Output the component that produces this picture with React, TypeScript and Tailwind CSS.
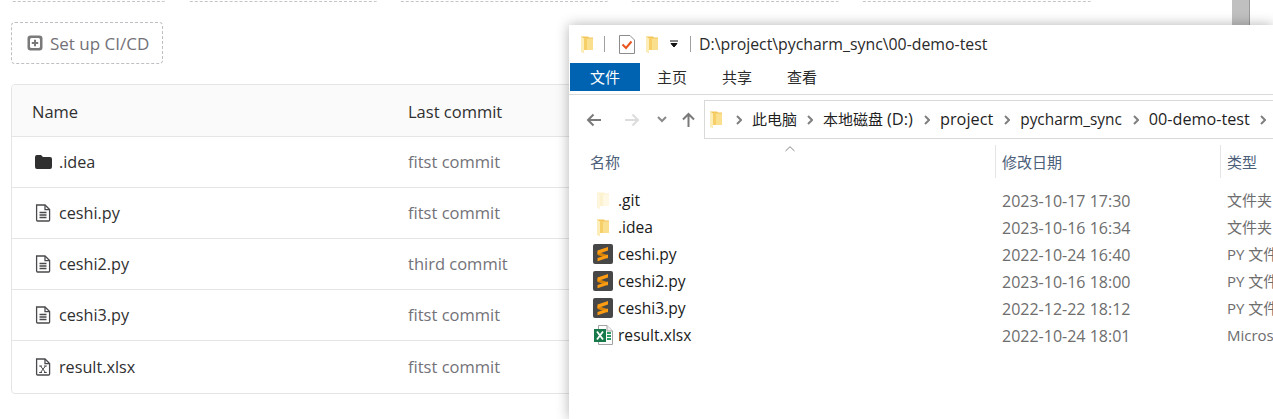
import React from "react";

const cjk = '"Open Sans","Noto Sans CJK SC",sans-serif';

function YFolder({ faded = false }: { faded?: boolean }) {
  return (
    <svg width="12" height="17" viewBox="0 0 12 17" className="shrink-0">
      <path d="M0 0.5 H7 L8 1.5 H12 V14 H3 V17 L0 15.5 Z" fill={faded ? "#fdf2cf" : "#f3c65a"} />
      <path d="M3 2.5 H12 V14 H3 Z" fill={faded ? "#fef8e4" : "#fadf8e"} />
      <path d="M3 2.5 H6 V14 H3 Z" fill={faded ? "#fdf2cf" : "#f6cf68"} />
      <path d="M0 0.5 L3 2.5 V17 L0 15.5 Z" fill={faded ? "#fef6dc" : "#fdeeb9"} />
    </svg>
  );
}

function Sublime() {
  return (
    <svg width="20" height="20" viewBox="0 0 20 20" className="shrink-0">
      <rect x="0" y="0" width="20" height="20" rx="2" fill="#474747" />
      <path d="M4.5 7.8 V11 L15 14.5 V11.2 Z" fill="#d98208" />
      <path d="M15 3 L4.5 6.6 V10.2 L15 6.6 Z" fill="#fb9c12" />
      <path d="M15 10.4 L4.5 14 V17.2 L15 13.7 Z" fill="#fb9c12" />
    </svg>
  );
}

function Excel() {
  return (
    <svg width="19" height="20" viewBox="0 0 19 20" className="shrink-0">
      <path d="M4.5 0.5 H13 L18.5 6 V19.5 H4.5 Z" fill="#fff" stroke="#a3a3a3" />
      <path d="M13 0.5 V6 H18.5" fill="#f0f0f0" stroke="#a3a3a3" />
      <path d="M13 8 H17 M13 11 H17 M13 14 H17" stroke="#2d9a62" strokeWidth="2" />
      <rect x="0" y="4" width="12" height="13" fill="#17794a" />
      <path d="M3 6.5 L9 14.5 M9 6.5 L3 14.5" stroke="#fff" strokeWidth="1.8" />
    </svg>
  );
}

function FileLines() {
  return (
    <svg width="16" height="18" viewBox="0 0 16 18" className="shrink-0" fill="none" stroke="#4a4a4e" strokeWidth="1.3">
      <path d="M1.6 1 H10 L14.6 5.6 V16 a1 1 0 0 1 -1 1 H2.6 a1 1 0 0 1 -1 -1 Z" />
      <path d="M10 1 V5.6 H14.6" />
      <path d="M4.5 8.5 H11.5 M4.5 11 H11.5 M4.5 13.5 H11.5" />
    </svg>
  );
}

function FileX() {
  return (
    <svg width="16" height="18" viewBox="0 0 16 18" className="shrink-0" fill="none" stroke="#4a4a4e" strokeWidth="1.3">
      <path d="M1.6 1 H10 L14.6 5.6 V16 a1 1 0 0 1 -1 1 H2.6 a1 1 0 0 1 -1 -1 Z" />
      <path d="M10 1 V5.6 H14.6" />
      <path d="M5.5 8 L10.5 14.5 M10.5 8 L5.5 14.5 M4.2 8 H7 M9 8 H11.8 M4.2 14.5 H7 M9 14.5 H11.8" strokeWidth="1" />
    </svg>
  );
}

function FolderDark() {
  return (
    <svg width="17" height="14" viewBox="0 0 17 14" className="shrink-0">
      <path d="M0 2 a2 2 0 0 1 2 -2 H6 L8 2 H15 a2 2 0 0 1 2 2 V12 a2 2 0 0 1 -2 2 H2 a2 2 0 0 1 -2 -2 Z" fill="#303030" />
    </svg>
  );
}

function Chevron() {
  return (
    <svg width="6" height="10" viewBox="0 0 6 10" className="shrink-0" fill="none" stroke="#808080" strokeWidth="2">
      <path d="M1 1 L5 5 L1 9" />
    </svg>
  );
}

const repoRows = [
  { icon: <FolderDark />, name: ".idea", commit: "fitst commit" },
  { icon: <FileLines />, name: "ceshi.py", commit: "fitst commit" },
  { icon: <FileLines />, name: "ceshi2.py", commit: "third commit" },
  { icon: <FileLines />, name: "ceshi3.py", commit: "fitst commit" },
  { icon: <FileX />, name: "result.xlsx", commit: "fitst commit" },
];

const fileRows = [
  { icon: <YFolder faded />, name: ".git", date: "2023-10-17 17:30", type: "文件夹" },
  { icon: <YFolder />, name: ".idea", date: "2023-10-16 16:34", type: "文件夹" },
  { icon: <Sublime />, name: "ceshi.py", date: "2022-10-24 16:40", type: "PY 文件" },
  { icon: <Sublime />, name: "ceshi2.py", date: "2023-10-16 18:00", type: "PY 文件" },
  { icon: <Sublime />, name: "ceshi3.py", date: "2022-12-22 18:12", type: "PY 文件" },
  { icon: <Excel />, name: "result.xlsx", date: "2022-10-24 18:01", type: "Microsoft Excel" },
];

const topSegments = [
  { w: 153, gap: 24 },
  { w: 188, gap: 23 },
  { w: 208, gap: 23 },
  { w: 208, gap: 23 },
  { w: 229, gap: 0 },
];

export default function App() {
  return (
    <div
      className="relative h-[419px] w-[1273px] overflow-hidden bg-white text-[#303030]"
      style={{ fontFamily: cjk }}
    >
      {/* GitLab page */}
      <div className="pl-[11px] pr-[12px]">
        <div className="flex h-[2px] pl-px">
          {topSegments.map((s, i) => (
            <div
              key={i}
              className="h-[2px] shrink-0 rounded-br border-r border-b border-dashed border-[#c4c4c8]"
              style={{ width: s.w, marginRight: s.gap }}
            />
          ))}
        </div>
        <div className="mt-[20px] flex h-[42px] w-[152px] items-center gap-[7px] rounded border border-dashed border-[#bfbfc3] pl-[15px] text-[17px] text-[#737278]">
          <svg width="16" height="16" viewBox="0 0 16 16">
            <rect x="0.5" y="0.5" width="15" height="15" rx="3" fill="#7a7a7a" />
            <rect x="3" y="3" width="10" height="10" rx="1.5" fill="#fff" />
            <path d="M8 4.8 V11.2 M4.8 8 H11.2" stroke="#7a7a7a" strokeWidth="2" />
          </svg>
          <span className="pt-px">Set up CI/CD</span>
        </div>
        <div className="mt-[20px] h-[310px] w-full overflow-hidden rounded border border-[#e5e5e5]">
          <div className="flex h-[52px] items-center border-b border-[#e5e5e5] bg-[#fafafa] pl-[20px] pt-[3px] text-[16.5px]">
            <span className="w-[376px]">Name</span>
            <span>Last commit</span>
          </div>
          {repoRows.map((r, i) => (
            <div
              key={r.name}
              className={`flex items-center pl-[23px] pt-px text-[16.5px] ${i < 4 ? "h-[51px] border-b border-[#e5e5e5]" : "h-[52px]"}`}
            >
              <div className="flex w-[373px] items-center gap-[8px]">
                <span className="flex w-[16px] justify-center">{r.icon}</span>
                <span className="text-[16.2px] text-[#303030]">{r.name}</span>
              </div>
              <span className="text-[#737278]">{r.commit}</span>
            </div>
          ))}
        </div>
      </div>

      {/* Scrollbar behind the window */}
      <div className="absolute right-[23px] top-0 h-[25px] w-[18px] border-r border-[#9a9a9a] bg-[#c0c0c0]" />

      {/* Explorer window */}
      <div className="absolute left-[569px] top-[25px] h-[394px] w-[704px] bg-white text-[15px] shadow-[0_0_12px_rgba(0,0,0,0.3)]">
        <div className="flex h-[38px] items-center pl-[12px] text-[#2a2a2a]">
          <YFolder />
          <span className="ml-[11px] h-[16px] w-px bg-[#a0a0a0]" />
          <svg width="16" height="19" viewBox="0 0 16 19" className="ml-[14px]">
            <path d="M0.5 0.5 H11 L15.5 5 V18.5 H0.5 Z" fill="#fff" stroke="#8c8c8c" />
            <path d="M3.5 9.5 L7 13 L12.5 6.5" fill="none" stroke="#e8541e" strokeWidth="2" />
          </svg>
          <span className="ml-[11px] flex"><YFolder /></span>
          <svg width="10" height="8" viewBox="0 0 10 8" className="ml-[11px]">
            <path d="M1 1 H9 M2 3.5 H8 L5 7 Z" stroke="#111" fill="#111" />
          </svg>
          <span className="ml-[11px] h-[16px] w-px bg-[#a0a0a0]" />
          <span className="ml-[8px] pt-[2px] text-[15.85px]">D:\project\pycharm_sync\00-demo-test</span>
        </div>
        <div className="flex h-[32px] items-start border-b border-[#dadada]">
          <div className="ml-px flex h-[28px] w-[70px] items-center justify-center bg-[#0063b1] text-white">文件</div>
          <div className="flex h-[28px] items-center gap-[35px] pl-[17px] text-[#2a2a2a]">
            <span>主页</span>
            <span>共享</span>
            <span>查看</span>
          </div>
        </div>
        <div className="flex h-[44px] items-end">
          <div className="flex h-[39px] w-[135px] shrink-0 items-center pl-[17px]">
            <svg width="15" height="14" viewBox="0 0 15 14" fill="none" stroke="#7a7a7a" strokeWidth="2">
              <path d="M15 7 H2 M7.5 1.5 L2 7 L7.5 12.5" />
            </svg>
            <svg width="15" height="14" viewBox="0 0 15 14" fill="none" stroke="#dcdcdc" strokeWidth="2" className="ml-[24px]">
              <path d="M0 7 H13 M7.5 1.5 L13 7 L7.5 12.5" />
            </svg>
            <svg width="10" height="7" viewBox="0 0 10 7" fill="none" stroke="#8a8a8a" strokeWidth="2" className="ml-[17px]">
              <path d="M1 1 L5 5 L9 1" />
            </svg>
            <svg width="13" height="15" viewBox="0 0 13 15" fill="none" stroke="#7a7a7a" strokeWidth="2" className="ml-[15px]">
              <path d="M6.5 15 V2 M1 7.5 L6.5 2 L12 7.5" />
            </svg>
          </div>
          <div className="flex h-[39px] flex-1 items-center whitespace-nowrap border-y border-l border-[#d9d9d9] pl-[5px] text-[16px] text-[#1f1f1f]">
            <YFolder />
            <span className="ml-[14px] flex"><Chevron /></span>
            <span className="ml-[10px] text-[15px]">此电脑</span>
            <span className="ml-[10px] flex"><Chevron /></span>
            <span className="ml-[10px] text-[15px]">本地磁盘 <span className="text-[16.5px]">(D:)</span></span>
            <span className="ml-[11px] flex"><Chevron /></span>
            <span className="ml-[10px] text-[16.3px]">project</span>
            <span className="ml-[11px] flex"><Chevron /></span>
            <span className="ml-[10px] text-[15.4px]">pycharm_sync</span>
            <span className="ml-[11px] flex"><Chevron /></span>
            <span className="ml-[10px] text-[16.2px]">00-demo-test</span>
            <span className="ml-[10px] flex"><Chevron /></span>
          </div>
        </div>
        <div className="relative flex h-[39px] items-end text-[#4c607a]">
          <svg width="10" height="6" viewBox="0 0 10 6" fill="none" stroke="#888" className="absolute left-[216px] top-[7px]">
            <path d="M0.5 5 L5 0.7 L9.5 5" />
          </svg>
          <span className="flex h-[33px] w-[426px] shrink-0 items-center pl-[21px] pt-px">名称</span>
          <span className="flex h-[33px] w-[225px] shrink-0 items-center border-l border-[#e5e5e5] pl-[6px] pt-px">修改日期</span>
          <span className="flex h-[33px] items-center border-l border-[#e5e5e5] pl-[6px] pt-px">类型</span>
        </div>
        <div className="mt-[9px]">
          {fileRows.map((r) => (
            <div key={r.name} className="flex h-[27px] items-center whitespace-nowrap">
              <div className="flex w-[433px] shrink-0 items-center pl-[24px]">
                <span className="flex w-[20px] justify-center">{r.icon}</span>
                <span className="ml-[5px] text-[15.6px] text-[#1a1a1a]">{r.name}</span>
              </div>
              <span className="w-[225px] shrink-0 text-[16px] text-[#6d6d6d]">{r.date}</span>
              <span className="text-[#6d6d6d]">{r.type}</span>
            </div>
          ))}
        </div>
      </div>
    </div>
  );
}
